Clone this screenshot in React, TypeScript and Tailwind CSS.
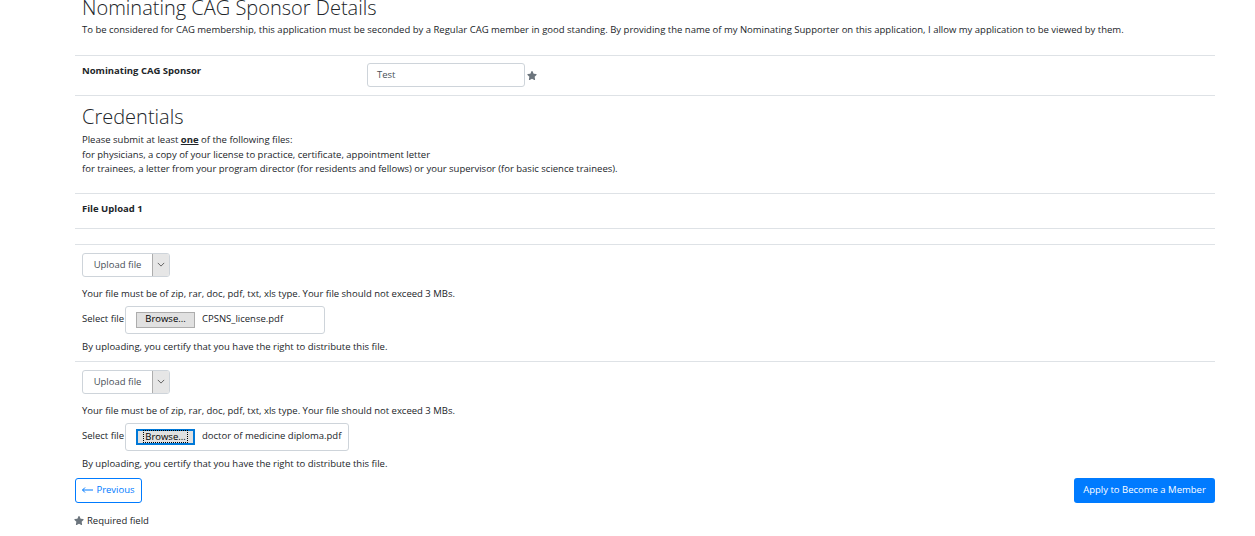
import React from 'react';

const Star = ({ className = '' }: { className?: string }) => (
  <svg viewBox="0 0 576 512" className={className} fill="#6c757d">
    <path d="M259.3 17.8L194 150.2 47.9 171.5c-26.2 3.8-36.7 36.1-17.7 54.6l105.7 103-25 145.5c-4.5 26.3 23.2 46 46.4 33.7L288 439.6l130.7 68.7c23.2 12.2 50.9-7.4 46.4-33.7l-25-145.5 105.7-103c19-18.5 8.5-50.8-17.7-54.6L382 150.2 316.7 17.8c-11.7-23.6-45.6-23.9-57.4 0z" />
  </svg>
);

const UploadSelect = () => (
  <div className="flex h-[24px] w-[88px] border border-[#ced4da] rounded-[3px] bg-white">
    <div className="flex-1 flex items-center justify-center pt-[1px] text-[9.5px] text-[#495057]">Upload file</div>
    <div className="w-[17px] flex items-center justify-center bg-[#e6e6e6] border-l border-[#adadad] rounded-r-[2px]">
      <svg viewBox="0 0 10 6" className="w-[8px] h-[5px]" fill="none" stroke="#444" strokeWidth="1">
        <path d="M1 1l4 4 4-4" />
      </svg>
    </div>
  </div>
);

const FileRow = ({ name, width, focused }: { name: string; width: string; focused?: boolean }) => (
  <div className="flex items-center mt-[5px]">
    <span className="text-[9.5px] w-[43px]">Select file</span>
    <div className={`h-[28px] flex items-center border border-[#ced4da] rounded-[3px] pl-[10px] ${width}`}>
      {focused ? (
        <div className="h-[16px] w-[59px] border-2 border-[#0078d7] bg-[#e1e1e1] flex items-center justify-center">
          <span className="text-[9.5px] text-black outline-1 outline-dotted outline-black px-[1px] leading-[11px]">Browse...</span>
        </div>
      ) : (
        <div className="h-[16px] w-[59px] border border-[#adadad] bg-[#e1e1e1] flex items-center justify-center text-[9.5px] text-black">
          Browse...
        </div>
      )}
      <span className="text-[9.5px] ml-[7px]">{name}</span>
    </div>
  </div>
);

const UploadBlock = ({ name, width, focused, last }: { name: string; width: string; focused?: boolean; last?: boolean }) => (
  <div className={`pt-[8px] pb-[7px] pl-[7px] ${last ? '' : 'border-b border-[#dee2e6]'}`}>
    <UploadSelect />
    <p className="text-[9.5px] leading-[14px] mt-[10px]">
      Your file must be of zip, rar, doc, pdf, txt, xls type. Your file should not exceed 3 MBs.
    </p>
    <FileRow name={name} width={width} focused={focused} />
    <p className="text-[9.5px] leading-[14px] mt-[6px]">
      By uploading, you certify that you have the right to distribute this file.
    </p>
  </div>
);

export default function App() {
  return (
    <div className="w-[1255px] h-[536px] overflow-hidden bg-white">
      <div className="w-[1140px] ml-[75px] font-['Open_Sans',sans-serif] text-[#212529]">
        {/* Sponsor */}
        <div className="pl-[7px] -mt-[5px]">
          <h1 className="text-[20px] leading-[25px] font-light text-[#212529]">Nominating CAG Sponsor Details</h1>
          <p className="text-[9.5px] leading-[14px] mt-[3px]">
            To be considered for CAG membership, this application must be seconded by a Regular CAG member in good standing. By providing the name of my Nominating Supporter on this application, I allow my application to be viewed by them.
          </p>
        </div>
        <div className="mt-[18px] border-t border-b border-[#dee2e6] h-[41px] pt-[7px] pl-[7px] flex items-start">
          <div className="w-[285px] text-[9.5px] leading-[14px] font-bold mt-[1px]">Nominating CAG Sponsor</div>
          <div className="w-[158px] h-[24px] border border-[#ced4da] rounded-[3px] flex items-center pl-[9px] text-[9.5px] text-[#495057]">Test</div>
          <Star className="w-[10px] h-[9px] ml-[2px] mt-[8px]" />
        </div>

        {/* Credentials */}
        <div className="pl-[7px] mt-[8px]">
          <h2 className="text-[20px] leading-[26px] font-light">Credentials</h2>
          <div className="text-[9.5px] leading-[14.5px] mt-[3px]">
            <p>Please submit at least <span className="font-bold underline">one</span> of the following files:</p>
            <p>for physicians, a copy of your license to practice, certificate, appointment letter</p>
            <p>for trainees, a letter from your program director (for residents and fellows) or your supervisor (for basic science trainees).</p>
          </div>
        </div>
        <div className="mt-[16px] border-t border-b border-[#dee2e6] h-[36px] pt-[8px] pl-[7px]">
          <div className="text-[9.5px] leading-[14px] font-bold">File Upload 1</div>
        </div>
        <div className="mt-[15px] border-t border-[#dee2e6]" />
        <UploadBlock name="CPSNS_license.pdf" width="w-[200px]" />
        <UploadBlock name="doctor of medicine diploma.pdf" width="w-[224px]" focused last />

        <div className="flex justify-between items-start">
          <button className="h-[25px] w-[67px] border border-[#007bff] rounded-[3px] text-[#007bff] text-[9.5px] flex items-center justify-center gap-[3px]">
            <svg viewBox="0 0 11 6" className="w-[11px] h-[6px]" fill="none" stroke="#007bff" strokeWidth="1">
              <path d="M0.5 3h10.5M3 0.5L0.5 3 3 5.5" />
            </svg>
            <span>Previous</span>
          </button>
          <button className="h-[25px] w-[141px] bg-[#007bff] rounded-[3px] text-white text-[9.5px] flex items-center justify-center">
            Apply to Become a Member
          </button>
        </div>
        <div className="flex items-center mt-[11px] -ml-[1px] text-[9.5px] leading-[14px]">
          <Star className="w-[10px] h-[9px] mr-[3px]" />
          <span>Required field</span>
        </div>
      </div>
    </div>
  );
}
